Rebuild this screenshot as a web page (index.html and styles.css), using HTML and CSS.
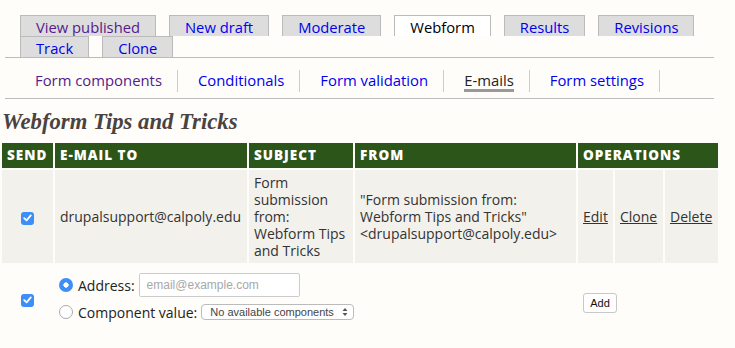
FILE: index.html
```html
<!DOCTYPE html>
<html>
<head>
<meta charset="utf-8">
<link rel="stylesheet" href="styles.css">
</head>
<body>
<div class="tabs-primary">
  <ul class="tabs">
    <li class="tab"><a class="visited" href="#">View published</a></li>
    <li class="tab"><a href="#">New draft</a></li>
    <li class="tab"><a href="#">Moderate</a></li>
    <li class="tab active"><a href="#">Webform</a></li>
    <li class="tab"><a href="#">Results</a></li>
    <li class="tab"><a href="#">Revisions</a></li>
    <li class="tab"><a href="#">Track</a></li>
    <li class="tab"><a href="#">Clone</a></li>
  </ul>
</div>
<ul class="subtabs">
  <li class="subtab"><a class="visited" href="#">Form components</a></li>
  <li class="subtab"><a href="#">Conditionals</a></li>
  <li class="subtab"><a href="#">Form validation</a></li>
  <li class="subtab"><a class="current" href="#">E-mails</a></li>
  <li class="subtab"><a href="#">Form settings</a></li>
</ul>
<h1 class="title">Webform Tips and Tricks</h1>
<table class="emails">
  <colgroup>
    <col class="c-send"><col class="c-to"><col class="c-subj"><col class="c-from"><col class="c-edit"><col class="c-clone"><col class="c-del">
  </colgroup>
  <thead>
    <tr>
      <th>Send</th><th>E-mail to</th><th>Subject</th><th>From</th><th colspan="3">Operations</th>
    </tr>
  </thead>
  <tbody>
    <tr class="row">
      <td class="center"><span class="check"><svg width="9" height="8" viewBox="0 0 9 8"><path d="M1.2 4.2 L3.6 6.4 L7.8 1.4" fill="none" stroke="#fff" stroke-width="1.8" stroke-linecap="round" stroke-linejoin="round"/></svg></span></td>
      <td>drupalsupport@calpoly.edu</td>
      <td>Form submission from: Webform Tips and Tricks</td>
      <td>"Form submission from: Webform Tips and Tricks" &lt;drupalsupport@calpoly.edu&gt;</td>
      <td><a class="op" href="#">Edit</a></td>
      <td><a class="op" href="#">Clone</a></td>
      <td><a class="op" href="#">Delete</a></td>
    </tr>
    <tr class="add-row">
      <td class="center"><span class="check"><svg width="9" height="8" viewBox="0 0 9 8"><path d="M1.2 4.2 L3.6 6.4 L7.8 1.4" fill="none" stroke="#fff" stroke-width="1.8" stroke-linecap="round" stroke-linejoin="round"/></svg></span></td>
      <td colspan="3" class="choices">
        <div class="choice">
          <span class="radio on"></span>
          <span class="label">Address:</span>
          <span class="textbox">email@example.com</span>
        </div>
        <div class="choice second">
          <span class="radio"></span>
          <span class="label">Component value:</span>
          <span class="select">No available components<svg width="6" height="10" viewBox="0 0 6 10"><path d="M0.5 4 L3 1 L5.5 4 Z M0.5 6 L3 9 L5.5 6 Z" fill="#555"/></svg></span>
        </div>
      </td>
      <td colspan="3" class="add-cell"><span class="btn">Add</span></td>
    </tr>
  </tbody>
</table>
</body>
</html>
```
FILE: styles.css
```css
html, body {
  margin: 0;
  padding: 0;
  background: #fefdf9;
  font-family: "Open Sans", "DejaVu Sans", sans-serif;
  color: #333;
}
a { text-decoration: none; color: #0000ee; }
a.visited { color: #551a8b; }

.tabs-primary {
  margin: 0 21px 0 5px;
  padding: 15px 0 0 15px;
  border-bottom: 1px solid #bbb;
}
.tabs {
  list-style: none;
  margin: 0;
  padding: 0;
  display: flex;
  flex-wrap: wrap;
}
.tab {
  margin-right: 13px;
  border: 1px solid #bbb;
  border-bottom: none;
  background: #ddd;
  padding: 0 15px;
  font-size: 14.75px;
  line-height: 22px;
  height: 20px;
}
.tab.active { background: #fff; }
.tab.active a { color: #000; }

.subtabs {
  list-style: none;
  margin: 0 21px 0 5px;
  padding: 12px 0 6px 10px;
  display: flex;
  border-bottom: 1px solid #bbb;
}
.subtab {
  font-size: 14.85px;
  line-height: 20px;
  padding: 0 15px 0 20px;
  border-right: 1px solid #ccc;
}
.subtab a.current {
  color: #222;
  display: inline-block;
  line-height: 18px;
  border-bottom: 3px solid #999;
}

.title {
  margin: 8px 0 4px 2px;
  font-family: "Liberation Serif", serif;
  font-style: italic;
  font-weight: bold;
  font-size: 22.7px;
  line-height: 30px;
  color: #4b4242;
}

.emails {
  border-spacing: 2px;
  table-layout: fixed;
  width: 720px;
  font-size: 14px;
  line-height: 17px;
}
.c-send { width: 51px; }
.c-to { width: 192px; }
.c-subj { width: 104px; }
.c-from { width: 221px; }
.c-edit { width: 35px; }
.c-clone { width: 48px; }
.c-del { width: 53px; }

.emails th {
  background: #2c5619;
  color: #fff;
  text-transform: uppercase;
  text-align: left;
  font-weight: 800;
  font-size: 13.5px;
  letter-spacing: 1px;
  padding: 4px 5px;
  line-height: 17px;
}
.row td {
  background: #f3f1ec;
  padding: 4px 5px;
  vertical-align: middle;
  color: #333;
}
.center { text-align: center; }
.check {
  display: inline-flex;
  align-items: center;
  justify-content: center;
  width: 13px;
  height: 13px;
  border-radius: 3px;
  background: #3d8ef6;
  vertical-align: middle;
}
.op {
  color: #333;
  text-decoration: underline;
}

.add-row td {
  padding: 0 5px;
  vertical-align: middle;
}
.add-row td.choices {
  padding: 8px 4px 9px 4px;
}
.choice {
  display: flex;
  align-items: center;
  height: 24px;
  color: #222;
  font-size: 14px;
}
.choice.second {
  margin-top: 4px;
  height: 22px;
}
.radio {
  width: 14px;
  height: 14px;
  box-sizing: border-box;
  border-radius: 50%;
  border: 1px solid #aaa;
  background: #fff;
  margin-right: 5px;
  flex: none;
}
.radio.on {
  border: none;
  background: radial-gradient(circle, #fff 0 2.4px, #3d8ef6 2.9px);
}
.label { margin-right: 4px; }
.textbox {
  width: 161px;
  height: 24px;
  box-sizing: border-box;
  border: 1px solid #ccc;
  border-radius: 2px;
  background: #fff;
  font-family: "Liberation Sans", sans-serif;
  font-size: 12px;
  color: #a8a8a8;
  padding: 0 7px;
  line-height: 22px;
}
.select {
  display: flex;
  align-items: center;
  justify-content: space-between;
  width: 153px;
  height: 16px;
  box-sizing: border-box;
  border: 1px solid #bbb;
  border-radius: 4px;
  background: #fff;
  font-family: "Liberation Sans", sans-serif;
  font-size: 11px;
  color: #444;
  padding: 0 5px 0 8px;
}
.add-cell { padding-top: 8px !important; }
.btn {
  display: inline-block;
  width: 34px;
  height: 20px;
  box-sizing: border-box;
  border: 1px solid #c8c8c8;
  border-radius: 3px;
  background: #fff;
  font-family: "Liberation Sans", sans-serif;
  font-size: 11px;
  line-height: 18px;
  text-align: center;
  color: #111;
}
```
